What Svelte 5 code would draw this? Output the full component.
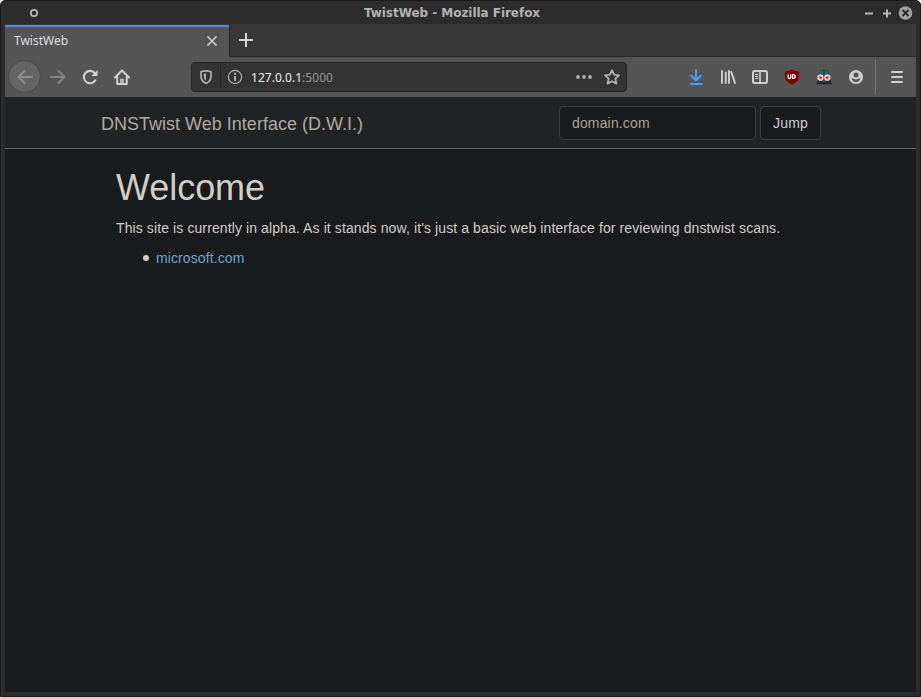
<script>
  const title = 'TwistWeb';
  const domains = ['microsoft.com'];
  let query = $state('');
</script>

<div class="window">
  <header class="titlebar">
    <svg class="pin" width="10" height="10" viewBox="0 0 10 10"><circle cx="5" cy="5" r="3.200" fill="none" stroke="#b8b8b8" stroke-width="1.700" /></svg>
    <span class="caption">{title} - Mozilla Firefox</span>
    <svg class="controls" width="54" height="16" viewBox="0 0 54 16">
      <path d="M5 8.500h8M23 8.500h8M27 4.500v8" stroke="#b8b8b8" stroke-width="2" fill="none" />
      <circle cx="45.500" cy="8" r="6.800" fill="#a2a2a2" />
      <path d="M42.500 5l6 6M48.500 5l-6 6" stroke="#2c2c2c" stroke-width="1.900" />
    </svg>
  </header>

  <div class="tabs">
    <div class="tab">
      <span>{title}</span>
      <svg width="12" height="12" viewBox="0 0 12 12"><path d="M1.500 1.500l9 9M10.500 1.500l-9 9" stroke="#d0d0d0" stroke-width="1.600" /></svg>
    </div>
    <div class="newtab">
      <svg width="14" height="14" viewBox="0 0 14 14"><path d="M0 7h14M7 0v14" stroke="#d6d6d6" stroke-width="2" /></svg>
    </div>
  </div>

  <div class="toolbar">
    <div class="nav">
      <div class="back">
        <svg width="16" height="16" viewBox="0 0 16 16" fill="none" stroke="#8d8d8d" stroke-width="2" stroke-linecap="round" stroke-linejoin="round"><path d="M15 8H1.500M7.500 2L1.500 8l6 6" /></svg>
      </div>
      <svg width="16" height="16" viewBox="0 0 16 16" fill="none" stroke="#858585" stroke-width="2" stroke-linecap="round" stroke-linejoin="round"><path d="M1 8h13.500M8.500 2l6 6-6 6" /></svg>
      <svg width="16" height="16" viewBox="0 0 16 16"><path d="M13.400 11.300A6.200 6.200 0 1 1 12.900 4.200" fill="none" stroke="#d0d0d0" stroke-width="2.100" stroke-linecap="round" /><path d="M15.600 1v5.300a.7.7 0 0 1-.7.7H9.300z" fill="#d0d0d0" /></svg>
      <svg width="16" height="16" viewBox="0 0 16 16" fill="none" stroke="#d0d0d0" stroke-width="2" stroke-linecap="round" stroke-linejoin="round"><path d="M1 8.500L8 1.500l7 7M3.200 8v7h9.600V8" /><path d="M7 14v-3.500h2V14" stroke-width="1.500" /></svg>
    </div>

    <div class="urlbar">
      <svg class="shield" width="16" height="16" viewBox="0 0 16 16"><path d="M8 1.900c2 0 3.800.4 5 .9V7.200c0 3.300-1.500 5.600-5 7.200C4.500 12.800 3 10.500 3 7.200V2.800C4.200 2.300 6 1.900 8 1.900z" fill="none" stroke="#b1b1b1" stroke-width="1.700" stroke-linejoin="round" /><path d="M8 4.500v7.200C6.500 10.600 5.800 9.200 5.800 7.200V4.800z" fill="#b1b1b1" /></svg>
      <i></i>
      <svg class="info" width="16" height="16" viewBox="0 0 16 16"><circle cx="8" cy="8" r="6.600" fill="none" stroke="#b1b1b1" stroke-width="1.200" /><path d="M8 3.700v2M8 7v5" stroke="#b1b1b1" stroke-width="2" /></svg>
      <span class="address">127.0.0.1<small>:5000</small></span>
      <svg class="dots" width="16" height="16" viewBox="0 0 16 16" fill="#b1b1b1"><circle cx="2" cy="8" r="1.900" /><circle cx="8" cy="8" r="1.900" /><circle cx="14" cy="8" r="1.900" /></svg>
      <svg width="16" height="16" viewBox="0 0 16 16"><path d="M8 1.200l2.100 4.500 4.900.6-3.600 3.400 1 4.900L8 12.200l-4.400 2.400 1-4.900L1 6.300l4.900-.6z" fill="none" stroke="#b1b1b1" stroke-width="1.800" stroke-linejoin="round" /></svg>
    </div>

    <div class="actions">
      <svg width="16" height="16" viewBox="0 0 16 16" fill="none" stroke="#45a1ff" stroke-width="2" stroke-linecap="round" stroke-linejoin="round"><path d="M8 1v10M3 6.500L8 11.300l5-4.800M3 15h10.500" /></svg>
      <svg width="16" height="16" viewBox="0 0 16 16" fill="none" stroke="#d0d0d0" stroke-width="1.900" stroke-linecap="round"><path d="M2 2v12M5.800 3.500V14M9 2v12M11.300 3L15 14" /></svg>
      <svg width="16" height="16" viewBox="0 0 16 16" fill="none" stroke="#d0d0d0"><rect x="1" y="2" width="14" height="12" rx="1.800" stroke-width="2" /><path d="M8 2v12" stroke-width="1.600" /><path d="M3.200 5.500h3M3.200 7.500h3M3.200 9.500h3" /></svg>
      <svg width="16" height="16" viewBox="0 0 16 16"><path d="M8 .6C10 1.900 12.500 2.500 15 2.600V8c0 3.500-3 5.500-7 7.600C4 13.500 1 11.500 1 8V2.600C3.500 2.500 6 1.900 8 .6z" fill="#800000" /><path d="M4.100 5.500v2.700a1.300 1.300 0 0 0 2.600 0V5.500M8.600 5.700v3.700h.9a1.850 1.850 0 0 0 0-3.700z" fill="none" stroke="#fff" stroke-width="1.300" /></svg>
      <svg width="16" height="16" viewBox="0 0 16 16"><path d="M.2 15.300l2-5.300.7-4.700C3.300 2.200 5.300.8 8 .8s5 1.400 5.500 4.500l.7 4.700 2 5.300z" fill="#202b35" /><path d="M3 7V5.500C3.300 2.500 5.300 1.100 8 1.100s4.700 1.400 5 4.400V7z" fill="#28677a" /><path d="M7.200 1h1.600v6H7.200z" fill="#1c4354" /><path d="M5.500 13.500L8 10l2.500 3.500z" fill="#246071" /><path d="M6.300 13.300h3.400v2H6.300z" fill="#101a22" /><circle cx="4.500" cy="8.700" r="3.100" fill="#ffe6df" /><circle cx="11.300" cy="8.700" r="3.100" fill="#ffe6df" /><circle cx="4.500" cy="8.700" r="1.500" fill="#9f3d35" stroke="#ef7061" /><circle cx="11.300" cy="8.700" r="1.500" fill="#9f3d35" stroke="#ef7061" /></svg>
      <svg width="16" height="16" viewBox="0 0 16 16"><circle cx="8" cy="8" r="7" fill="#d0d0d0" /><circle cx="8" cy="6" r="2.500" fill="#555" /><path d="M3.500 9.500h2.200c1.200 1.200 3.400 1.200 4.600 0h2.200C12 11.800 10.200 13 8 13s-4-1.200-4.500-3.500z" fill="#555" /></svg>
    </div>
    <div class="menu">
      <svg width="16" height="16" viewBox="0 0 16 16"><path d="M3 3h10M3 8h10M3 13h10" stroke="#d0d0d0" stroke-width="2" stroke-linecap="round" /></svg>
    </div>
  </div>

  <div class="page">
    <nav class="navbar">
      <span class="brand">DNSTwist Web Interface (D.W.I.)</span>
      <form>
        <input placeholder="domain.com" bind:value={query} />
        <button type="button">Jump</button>
      </form>
    </nav>
    <main>
      <h1>Welcome</h1>
      <p>This site is currently in alpha. As it stands now, it's just a basic web interface for reviewing dnstwist scans.</p>
      <ul>
        {#each domains as domain}
          <li><a href="#{domain}">{domain}</a></li>
        {/each}
      </ul>
    </main>
  </div>
</div>

<style>
  :global(body) { background: #fff; }
  svg { display: block; flex: none; }
  .window {
    box-sizing: border-box;
    width: 921px;
    height: 697px;
    padding: 0 4px 4px;
    border: 1px solid #1b1b1b;
    border-radius: 5px 5px 0 0;
    background: #2c2c2c;
    display: flex;
    flex-direction: column;
    overflow: hidden;
  }
  .titlebar {
    height: 23px;
    flex: none;
    display: flex;
    align-items: center;
    justify-content: space-between;
    font: bold 12px "DejaVu Sans", sans-serif;
    color: #b2b2b2;
  }
  .pin { margin: 1px 0 0 24px; }
  .caption { margin-left: 26px; flex: 1; text-align: center; padding-right: 21px; letter-spacing: -0.04px; }
  .controls { margin-right: 2px; }
  .tabs {
    height: 33px;
    flex: none;
    display: flex;
    background: #383838;
    font: 12px "Noto Sans", sans-serif;
  }
  .tab {
    box-sizing: border-box;
    width: 224px;
    margin-top: 1px;
    padding: 0 11px 2px 9px;
    border-top: 2px solid #5287e2;
    background: #555;
    color: #dedede;
    display: flex;
    align-items: center;
    justify-content: space-between;
  }
  .tab span { margin-bottom: 2px; }
  .newtab {
    flex: 1;
    border-left: 1px solid #292929;
    border-bottom: 1px solid #292929;
    padding: 9px 0 0 9px;
  }
  .toolbar {
    box-sizing: border-box;
    height: 41px;
    flex: none;
    padding-bottom: 1px;
    border-bottom: 1px solid #252525;
    background: #555;
    display: flex;
    align-items: center;
  }
  .nav { display: flex; align-items: center; gap: 16px; margin-left: 4px; width: 182px; }
  .back {
    box-sizing: border-box;
    width: 33px;
    height: 33px;
    margin: 0 -7px 0 -1px;
    border: 1px solid #484848;
    border-radius: 50%;
    background: #656565;
    display: flex;
    align-items: center;
    justify-content: center;
  }
  .urlbar {
    box-sizing: border-box;
    width: 436px;
    height: 30px;
    padding: 0 6px;
    border: 1px solid #262626;
    border-radius: 4px;
    background: #333;
    display: flex;
    align-items: center;
    font: 12px "Noto Sans", sans-serif;
    color: #eee;
  }
  .urlbar i { width: 1px; height: 22px; margin: 0 6px; background: #262626; }
  .address { flex: 1; margin: 2px 0 0 8px; letter-spacing: 0.03px; }
  .address small { font-size: inherit; color: #949494; }
  .dots { margin-right: 12px; }
  .actions { display: flex; gap: 16px; margin-left: 61px; width: 187px; }
  .menu { height: 34px; padding-left: 13px; border-left: 1px solid #747474; display: flex; align-items: center; }
  .page {
    flex: 1;
    min-height: 0;
    background: #1a1b1c;
    color: #d2cec7;
    font: 14px/20px "Liberation Sans", Arial, sans-serif;
  }
  .navbar {
    box-sizing: border-box;
    height: 51px;
    padding: 0 95px 0 96px;
    background: #212224;
    border-bottom: 1px solid #646464;
    display: flex;
    align-items: center;
    justify-content: space-between;
  }
  .brand { font-size: 18px; color: #b0aaa0; margin-top: 2px; letter-spacing: 0.01px; }
  form { display: flex; gap: 4px; }
  input, button {
    box-sizing: border-box;
    height: 34px;
    border: 1px solid #3c3d3f;
    border-radius: 4px;
    background: #1a1b1c;
    color: #d2cec7;
    font: 14px/20px "Liberation Sans", Arial, sans-serif;
    padding: 6px 11px;
  }
  input { width: 197px; padding-left: 12px; letter-spacing: 0.15px; }
  input::placeholder { color: #aaa398; opacity: 1; }
  button { width: 61px; letter-spacing: 0.2px; }
  main { padding: 20px 111px; }
  h1 { margin: -1px 0 10px; font-size: 36px; line-height: 39.6px; font-weight: 400; letter-spacing: -0.05px; }
  p { margin: 0 0 10px; letter-spacing: 0.105px; white-space: nowrap; }
  ul { margin: 0; padding-left: 27px; list-style: none; }
  li { display: flex; align-items: center; gap: 7px; letter-spacing: 0.105px; }
  li::before { content: ""; width: 6px; height: 6px; border-radius: 50%; background: #d2cec7; }
  a { color: #6da4d0; text-decoration: none; }
</style>
